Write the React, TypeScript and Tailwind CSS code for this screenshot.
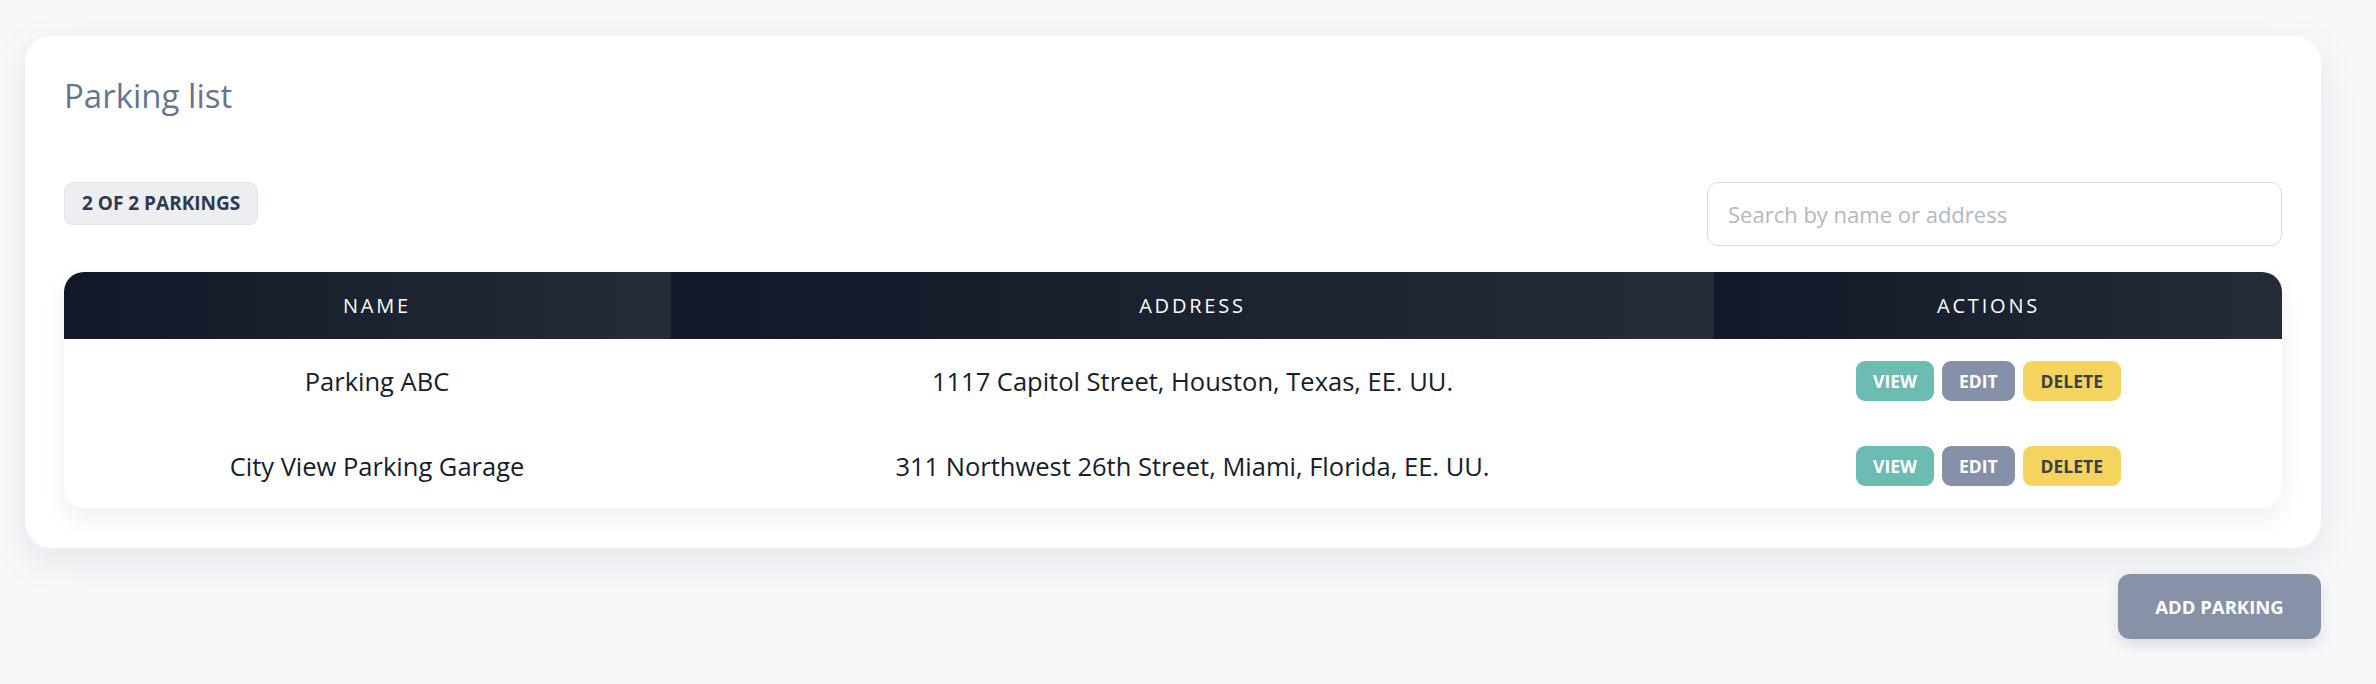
import { useState } from 'react';

type Parking = { id: number; name: string; address: string };

const parkings: Parking[] = [
  { id: 1, name: 'Parking ABC', address: '1117 Capitol Street, Houston, Texas, EE. UU.' },
  { id: 2, name: 'City View Parking Garage', address: '311 Northwest 26th Street, Miami, Florida, EE. UU.' },
];

const headCell =
  'h-[67px] bg-linear-to-r from-[#111827] to-[#252c39] text-white text-[20px] font-medium tracking-[0.14em] text-center align-middle';

export default function App() {
  const [query, setQuery] = useState('');

  const q = query.trim().toLowerCase();
  const shown = parkings.filter(
    (p) => !q || p.name.toLowerCase().includes(q) || p.address.toLowerCase().includes(q)
  );

  return (
    <div
      className="min-h-screen bg-[#f7f8fa] pl-[25px] pr-[55px] pt-[36px] pb-10"
      style={{ fontFamily: '"Open Sans", "Noto Sans", sans-serif' }}
    >
      <div className="bg-white rounded-[26px] shadow-[0_12px_40px_rgba(15,23,42,0.08)] px-[39px] pt-[38px] pb-[40px]">
        <h1 className="text-[33px] leading-[44px] text-[#66748e] font-medium">Parking list</h1>

        <div className="mt-[64px] flex items-start justify-between">
          <span className="inline-flex items-center h-[43px] px-[17px] rounded-[9px] bg-[#eceef2] border border-[#e0e3e8] text-[#2f3a50] text-[19px] font-bold">
            {shown.length} OF {parkings.length} PARKINGS
          </span>
          <input
            value={query}
            onChange={(e) => setQuery(e.target.value)}
            placeholder="Search by name or address"
            className="w-[575px] h-[64px] rounded-[11px] border border-[#d8dce2] bg-white px-[20px] text-[22px] text-[#1a202c] placeholder:text-[#b3b8c0] outline-none"
          />
        </div>

        <div className="mt-[26px] rounded-[20px] overflow-hidden bg-white shadow-[0_10px_24px_rgba(15,23,42,0.07)]">
          <table className="w-full border-collapse table-fixed">
            <colgroup>
              <col className="w-[607px]" />
              <col />
              <col className="w-[568px]" />
            </colgroup>
            <thead>
              <tr>
                <th className={`${headCell} pl-[19px]`}>NAME</th>
                <th className={headCell}>ADDRESS</th>
                <th className={`${headCell} pr-[19px]`}>ACTIONS</th>
              </tr>
            </thead>
            <tbody>
              {shown.map((p) => (
                <tr key={p.id} className="h-[84.5px] text-[25.5px] text-[#161d2b]">
                  <td className="pl-[19px] text-center align-middle">{p.name}</td>
                  <td className="text-center align-middle">{p.address}</td>
                  <td className="pr-[19px] align-middle">
                    <div className="flex justify-center gap-2 text-[17.5px] font-bold">
                      <button className="h-[40px] px-[17px] rounded-[9px] bg-[#6cbcb4] text-white">VIEW</button>
                      <button className="h-[40px] px-[17px] rounded-[9px] bg-[#8690a8] text-white">EDIT</button>
                      <button className="h-[40px] px-[18px] rounded-[9px] bg-[#f4d35e] text-[#3a404c]">DELETE</button>
                    </div>
                  </td>
                </tr>
              ))}
            </tbody>
          </table>
        </div>
      </div>

      <div className="mt-[26px] flex justify-end">
        <button className="w-[203px] h-[65px] rounded-[12px] bg-[#8791a8] text-white text-[18.5px] font-bold shadow-[0_6px_14px_rgba(15,23,42,0.12)]">
          ADD PARKING
        </button>
      </div>
    </div>
  );
}
